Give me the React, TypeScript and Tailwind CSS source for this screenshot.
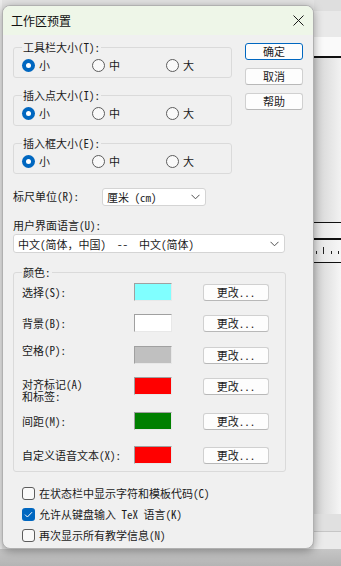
import React from "react";

function Radio({ checked, label, w }: { checked?: boolean; label: string; w: string }) {
  return (
    <div className={`flex items-center ${w}`}>
      {checked ? (
        <span className="w-[13px] h-[13px] rounded-full bg-[#0067c0] flex items-center justify-center shrink-0">
          <span className="w-[5px] h-[5px] rounded-full bg-white" />
        </span>
      ) : (
        <span className="w-[13px] h-[13px] rounded-full border border-[#5c5c5c] bg-[#f9f9f9] shrink-0" />
      )}
      <span className="ml-[4px]">{label}</span>
    </div>
  );
}

function SizeGroup({ title }: { title: string }) {
  return (
    <fieldset className="border border-[#dadada] rounded-[3px] pl-[8px] pt-[5px] pb-[5px] min-w-0">
      <legend className="px-[1px] text-[11px] leading-[12px]">{title}</legend>
      <div className="flex items-center h-[14px]">
        <Radio checked label="小" w="w-[70px]" />
        <Radio label="中" w="w-[74px]" />
        <Radio label="大" w="w-auto" />
      </div>
    </fieldset>
  );
}

function Chevron() {
  return (
    <svg width="9" height="6" viewBox="0 0 9 6" className="shrink-0">
      <polyline points="0.5,0.8 4.5,4.8 8.5,0.8" fill="none" stroke="#505050" strokeWidth="1" />
    </svg>
  );
}

function DlgButton({ label, focused, w }: { label: string; focused?: boolean; w: string }) {
  return (
    <div
      className={`${w} h-[17px] rounded-[3px] bg-[#fdfdfd] flex items-center justify-center text-[11px] leading-none border ${
        focused ? "border-[#0067c0]" : "border-[#d0d0d0] border-b-[#b8b8b8]"
      }`}
    >
      {label}
    </div>
  );
}

function Swatch({ color }: { color: string }) {
  return (
    <div
      className="w-[38px] h-[18px] shrink-0 border border-t-[#a0a0a0] border-l-[#a0a0a0] border-r-[#e8e8e8] border-b-[#e8e8e8]"
      style={{ backgroundColor: color }}
    />
  );
}

function CheckBox({ checked, label }: { checked?: boolean; label: string }) {
  return (
    <div className="flex items-center h-[14px] ml-[9px]">
      {checked ? (
        <span className="w-[13px] h-[13px] rounded-[3px] bg-[#0067c0] flex items-center justify-center shrink-0">
          <svg width="9" height="7" viewBox="0 0 9 7">
            <polyline points="1,3.6 3.4,6 8,1.2" fill="none" stroke="#ffffff" strokeWidth="1" />
          </svg>
        </span>
      ) : (
        <span className="w-[13px] h-[13px] rounded-[3px] border border-[#5c5c5c] bg-[#f9f9f9] shrink-0" />
      )}
      <span className="ml-[4px]">{label}</span>
    </div>
  );
}

export default function App() {
  return (
    <div className="relative w-[341px] h-[566px] overflow-hidden font-['Noto_Sans_Mono_CJK_SC','Liberation_Mono','Noto_Sans_CJK_SC',monospace] text-[11px] leading-[12px] text-[#1b1b1b]">
      {/* background application */}
      <div className="absolute inset-0 flex flex-col">
        <div className="flex-1 flex">
          <div className="w-[2px] bg-[#ececec]" />
          <div className="flex-1 bg-[#e3e3e3]" />
          <div className="w-[27px] flex flex-col">
            <div className="h-[11px] bg-[#dedede]" />
            <div className="h-[26px] bg-[#e9e9e9]" />
            <div className="h-[19px] bg-[#fafafa]" />
            <div className="h-[1.5px] bg-[#111]" />
            <div className="h-[164px] bg-linear-to-r from-[#d2d2d2] to-[#f2f2f2]" />
            <div className="h-[1.5px] bg-[#111]" />
            <div className="h-[15px] bg-linear-to-r from-[#e2e2e2] to-[#f6f6f6]" />
            <div className="h-[1.5px] bg-[#111]" />
            <div className="h-[22px] bg-linear-to-r from-[#e2e2e2] to-[#f6f6f6] flex items-end pb-[8px]">
              <span className="ml-[2px] w-px h-[3px] bg-[#222]" />
              <span className="ml-[6px] w-px h-[7px] bg-[#222]" />
              <span className="ml-[7px] w-px h-[3px] bg-[#222]" />
              <span className="ml-[6px] w-px h-[3px] bg-[#222]" />
            </div>
            <div className="h-[1.5px] bg-[#111]" />
            <div className="flex-1 bg-linear-to-r from-[#d2d2d2] to-[#f6f6f6]" />
            <div className="h-[17px] bg-[#e0e0e0]" />
            <div className="h-px bg-[#c6c6c6]" />
            <div className="h-[17px] bg-[#ebebeb]" />
          </div>
        </div>
        <div className="h-[17px] bg-linear-to-b from-[#c6c6c6] to-[#b4b4b4]" />
      </div>

      {/* dialog window */}
      <div className="absolute left-[2px] top-[5px] w-[312px] h-[544px] rounded-[8px] overflow-hidden border border-[#b0b0b0] shadow-[0_2px_10px_rgba(0,0,0,0.35)] flex flex-col bg-[#f0f0f0]">
        <div className="h-[29px] shrink-0 bg-[#eef6e8] flex items-center justify-between pl-[8px] pr-[9px]">
          <span className="text-[12px] leading-[14px] font-['Noto_Sans_CJK_SC',sans-serif] text-[#111]">工作区预置</span>
          <svg width="11" height="11" viewBox="0 0 11 11">
            <path d="M0.5 0.5 L10.5 10.5 M10.5 0.5 L0.5 10.5" stroke="#1a1a1a" strokeWidth="1" />
          </svg>
        </div>

        <div className="flex-1 flex flex-col pl-[10px] pr-[9px] pt-[6px]">
          <div className="flex">
            <div className="w-[219px] flex flex-col gap-[11px]">
              <SizeGroup title="工具栏大小(T):" />
              <SizeGroup title="插入点大小(I):" />
              <SizeGroup title="插入框大小(E):" />
            </div>
            <div className="ml-[13px] mt-[2px] flex flex-col gap-[8px]">
              <DlgButton label="确定" focused w="w-[58px]" />
              <DlgButton label="取消" w="w-[58px]" />
              <DlgButton label="帮助" w="w-[58px]" />
            </div>
          </div>

          <div className="flex items-center mt-[14px] h-[18px]">
            <span className="w-[89px] mb-[2px]">标尺单位(R):</span>
            <div className="w-[104px] h-[18px] bg-white border border-[#d4d4d4] rounded-[3px] flex items-center justify-between pl-[4px] pr-[5px]">
              <span>厘米 (cm)</span>
              <Chevron />
            </div>
          </div>

          <div className="mt-[13px]">用户界面语言(U):</div>
          <div className="mt-[3px] w-[272px] h-[19px] bg-white border border-[#d4d4d4] rounded-[3px] flex items-center justify-between pl-[4px] pr-[5px]">
            <span className="whitespace-pre">中文(简体，中国)  --  中文(简体)</span>
            <Chevron />
          </div>

          <fieldset className="mt-[13px] w-[273px] border border-[#dadada] rounded-[3px] pl-[8px] pb-[7px] min-w-0">
            <legend className="px-[1px] text-[11px] leading-[12px]">颜色:</legend>
            <div className="flex items-center h-[18px] mt-[5px]">
              <span className="w-[112px]">选择(S):</span>
              <Swatch color="#80ffff" />
              <div className="ml-[31px]"><DlgButton label="更改..." w="w-[66px]" /></div>
            </div>
            <div className="flex items-center h-[18px] mt-[13px]">
              <span className="w-[112px]">背景(B):</span>
              <Swatch color="#ffffff" />
              <div className="ml-[31px]"><DlgButton label="更改..." w="w-[66px]" /></div>
            </div>
            <div className="flex items-center h-[18px] mt-[14px]">
              <span className="w-[112px] mb-[10px]">空格(P):</span>
              <Swatch color="#c0c0c0" />
              <div className="ml-[31px]"><DlgButton label="更改..." w="w-[66px]" /></div>
            </div>
            <div className="flex items-start mt-[13px]">
              <span className="w-[112px] mt-[1px] leading-[12px]">对齐标记(A)<br />和标签:</span>
              <Swatch color="#ff0000" />
              <div className="ml-[31px] mt-[1px]"><DlgButton label="更改..." w="w-[66px]" /></div>
            </div>
            <div className="flex items-center h-[18px] mt-[10px]">
              <span className="w-[112px]">间距(M):</span>
              <Swatch color="#008000" />
              <div className="ml-[31px]"><DlgButton label="更改..." w="w-[66px]" /></div>
            </div>
            <div className="flex items-center h-[18px] mt-[16px]">
              <span className="w-[112px]">自定义语音文本(X):</span>
              <Swatch color="#ff0000" />
              <div className="ml-[31px]"><DlgButton label="更改..." w="w-[66px]" /></div>
            </div>
          </fieldset>

          <div className="mt-[14px] flex flex-col gap-[7px]">
            <CheckBox label="在状态栏中显示字符和模板代码(C)" />
            <CheckBox checked label="允许从键盘输入 TeX 语言(K)" />
            <CheckBox label="再次显示所有教学信息(N)" />
          </div>
        </div>
      </div>
    </div>
  );
}
